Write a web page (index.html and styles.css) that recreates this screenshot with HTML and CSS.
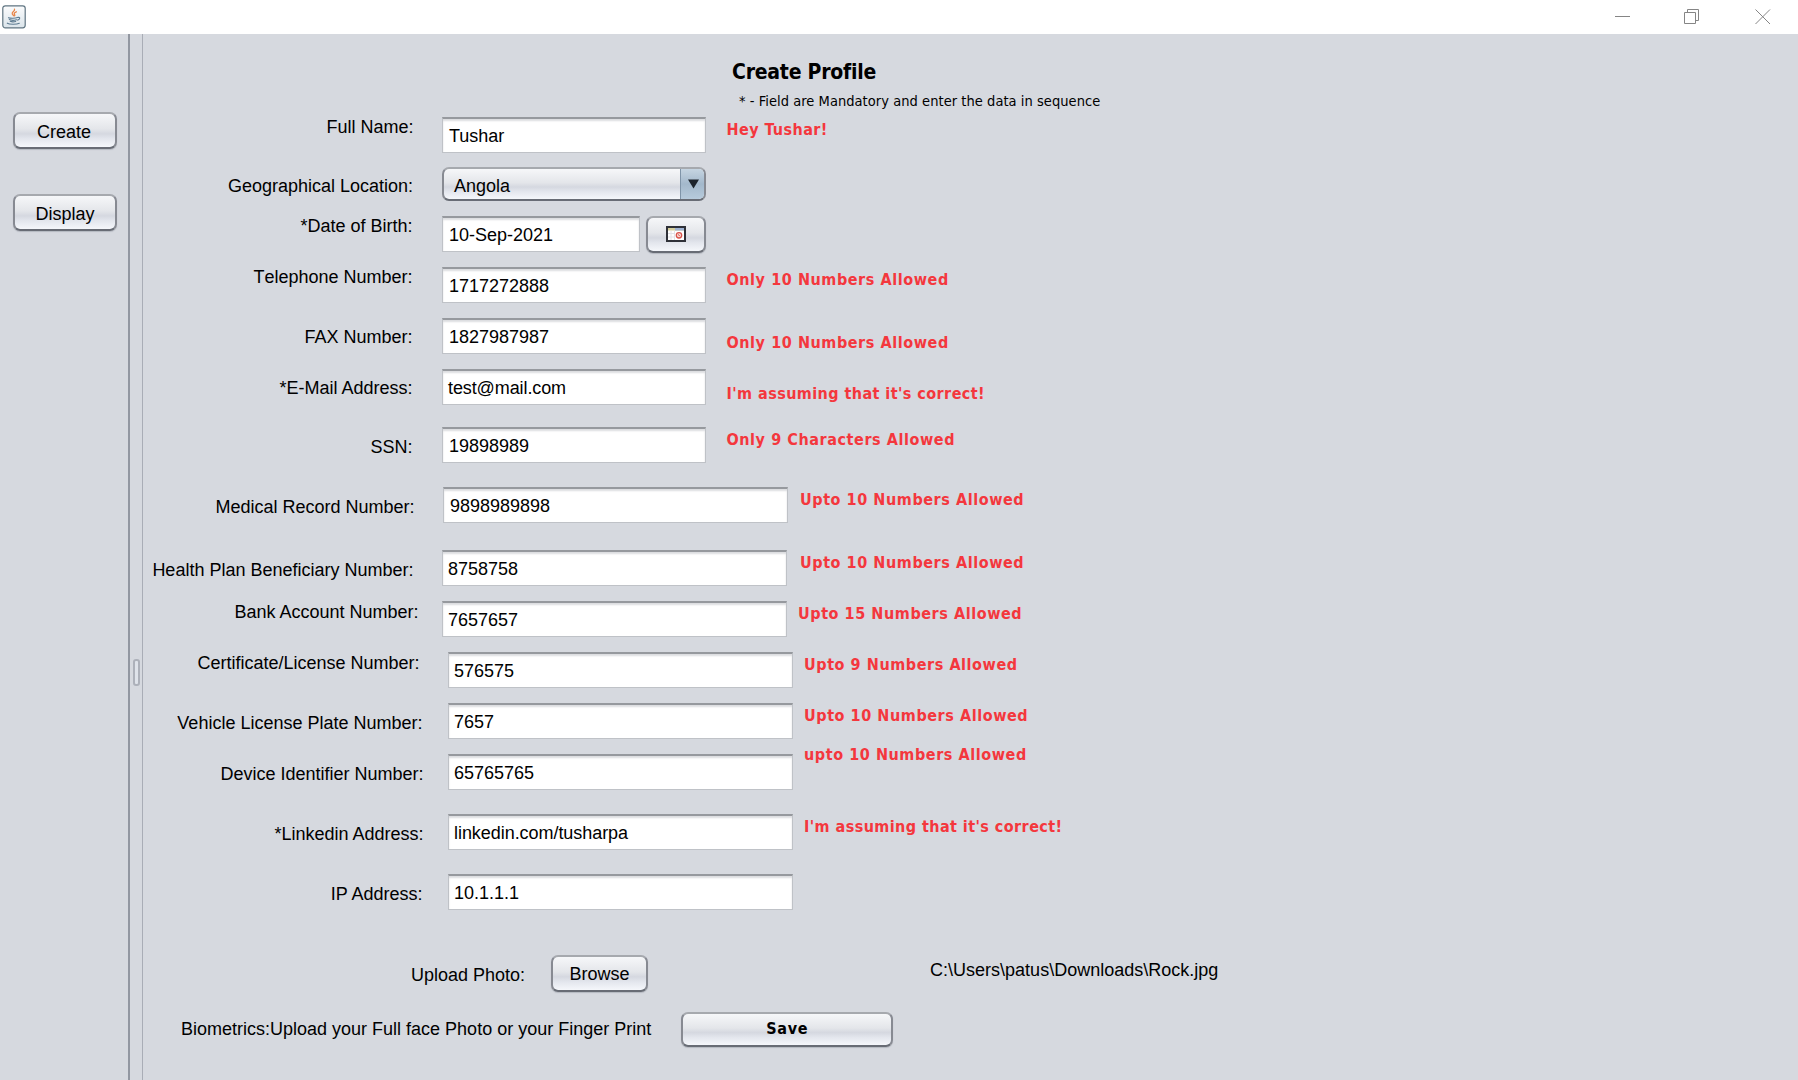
FILE: index.html
```
<!DOCTYPE html>
<html lang="en">
<head>
<meta charset="utf-8">
<title>Create Profile</title>
<link rel="stylesheet" href="styles.css">
</head>
<body>
<header class="titlebar">
  <svg class="java-icon" width="24" height="24" viewBox="0 0 24 24">
    <defs><linearGradient id="tile" x1="0" y1="0" x2="0" y2="1"><stop offset="0" stop-color="#fbfcfd"/><stop offset="1" stop-color="#dbe4ea"/></linearGradient></defs>
    <rect x=".8" y=".8" width="22.4" height="22" rx="2.5" fill="url(#tile)" stroke="#5f7481" stroke-width="1.2"/>
    <path d="M12.500 4.200c.8 2.100-3.300 2.800-2.200 4.800.4.700.9 1 1.300 1.700M14.300 6.800c-1.500.7-2.700 1.400-1.700 2.700.4.600.3 1-.1 1.400" fill="none" stroke="#e8864a" stroke-width="1.300" stroke-linecap="round"/>
    <path d="M6.500 12.700c1.500.8 7 .7 9-.1M7.300 14.600c1.800.8 5.400.7 7.200.1M8.200 16.300c1.500.6 3.900.6 5.500.1M16 12.400c2.400-.5 2.300 2-.4 2.700M5.300 18.200c2 1.300 9.500 1.300 12 0" fill="none" stroke="#5d7b91" stroke-width="1.100" stroke-linecap="round"/>
  </svg>
  <div class="window-controls">
    <svg width="16" height="16" viewBox="0 0 16 16"><path d="M0 7.5h15"/></svg>
    <svg width="16" height="16" viewBox="0 0 16 16"><path d="M.5 3.5h11v11h-11zM3.5 3.5v-3h11v11h-3"/></svg>
    <svg width="16" height="16" viewBox="0 0 16 16"><path d="M.5.5L15 15M15 .5L.5 15"/></svg>
  </div>
</header>
<main class="split">
  <nav class="sidebar">
    <button class="btn create">Create</button>
    <button class="btn display">Display</button>
  </nav>
  <div class="divider"><span class="grip"></span></div>
  <section class="content">
    <h1 class="title">Create Profile</h1>
    <p class="note">* - Field are Mandatory and enter the data in sequence</p>
    <form class="form">
      <div class="row name"><label>Full Name:</label><span class="field">Tushar</span><em>Hey Tushar!</em></div>
      <div class="row location"><label>Geographical Location:</label><span class="combo"><span>Angola</span><i><svg width="11" height="10" viewBox="0 0 11 10"><path d="M0 .5h11L5.5 9.500z" fill="#1c232b"/></svg></i></span></div>
      <div class="row birth"><label>*Date of Birth:</label><span class="field">10-Sep-2021</span><button type="button" class="btn picker"><svg width="20" height="16" viewBox="0 0 20 16"><path d="M1 1h18v14H1z" fill="#fff" stroke="#2f3138" stroke-width="2"/><path d="M2 2h16v2.500H2z" fill="#d5cf9d"/><path d="M9 2h9v2.500H9z" fill="#9fb3d3"/><path d="M5 5v9M8.500 5v9M2 7.500h7M2 11h7" stroke="#e2e2e8" fill="none"/><circle cx="13" cy="9.300" r="2.700" fill="#f8dcd8" stroke="#d9534a" stroke-width="1.300"/><path d="M12 8.500l1.800 1.300" stroke="#d9534a"/></svg></button></div>
      <div class="row phone"><label>Telephone Number:</label><span class="field">1717272888</span><em>Only 10 Numbers Allowed</em></div>
      <div class="row fax"><label>FAX Number:</label><span class="field">1827987987</span><em>Only 10 Numbers Allowed</em></div>
      <div class="row email"><label>*E-Mail Address:</label><span class="field">test@mail.com</span><em class="assumed">I'm assuming that it's correct!</em></div>
      <div class="row ssn"><label>SSN:</label><span class="field">19898989</span><em>Only 9 Characters Allowed</em></div>
      <div class="row wide record"><label>Medical Record Number:</label><span class="field">9898989898</span><em>Upto 10 Numbers Allowed</em></div>
      <div class="row wide plan"><label>Health Plan Beneficiary Number:</label><span class="field">8758758</span><em>Upto 10 Numbers Allowed</em></div>
      <div class="row wide bank"><label>Bank Account Number:</label><span class="field">7657657</span><em>Upto 15 Numbers Allowed</em></div>
      <div class="row wide indent certificate"><label>Certificate/License Number:</label><span class="field">576575</span><em>Upto 9 Numbers Allowed</em></div>
      <div class="row wide indent vehicle"><label>Vehicle License Plate Number:</label><span class="field">7657</span><em>Upto 10 Numbers Allowed</em></div>
      <div class="row wide indent device"><label>Device Identifier Number:</label><span class="field">65765765</span><em>upto 10 Numbers Allowed</em></div>
      <div class="row wide indent linkedin"><label>*Linkedin Address:</label><span class="field">linkedin.com/tusharpa</span><em class="assumed">I'm assuming that it's correct!</em></div>
      <div class="row wide indent ip"><label>IP Address:</label><span class="field">10.1.1.1</span></div>
    </form>
    <div class="upload"><span class="caption">Upload Photo:</span><button class="btn browse">Browse</button><span class="path">C:\Users\patus\Downloads\Rock.jpg</span></div>
    <div class="submit"><span class="caption">Biometrics:Upload your Full face Photo or your Finger Print</span><button class="btn save">Save</button></div>
  </section>
</main>
</body>
</html>
```
FILE: styles.css
```
* { box-sizing: border-box; }
body {
  margin: 0;
  width: 1798px;
  height: 1080px;
  display: flex;
  flex-direction: column;
  overflow: hidden;
  background: #d6d9df;
  color: #000;
  font: 18px/20px "Liberation Sans", Arial, sans-serif;
}

/* Window title bar */
.titlebar {
  height: 34px;
  flex: none;
  display: flex;
  justify-content: space-between;
  align-items: flex-start;
  padding: 5px 27px 0 2px;
  background: #fff;
}
.window-controls { display: flex; gap: 55px; padding-top: 4px; }
.window-controls svg { fill: none; stroke: #858585; stroke-width: 1; }
.window-controls svg:first-child { margin-right: -2px; }

/* Split pane */
.split { flex: 1; display: flex; }
.sidebar {
  width: 128px;
  padding: 78px 11px 0 13px;
  display: flex;
  flex-direction: column;
  gap: 45px;
}
.divider {
  width: 15px;
  display: flex;
  justify-content: center;
  align-items: flex-start;
  border-left: 2px solid #9297a1;
  border-right: 1px solid #a9adb6;
  padding-top: 625px;
}
.grip {
  width: 7px;
  height: 27px;
  border: 2px solid #adb1ba;
  border-radius: 3px;
  background: #dfe3ea;
}

/* Buttons */
.btn {
  height: 37px;
  padding: 0 0 1px;
  border: 2px solid;
  border-color: #a6a9ae #878a92 #686c75 #878a92;
  border-radius: 7px;
  background: linear-gradient(#f6f7f9, #e4e6ea 45%, #d5d8e0 60%, #e3e6ed 75%, #f5f7fb) padding-box;
  box-shadow: 0 1px 1px #b4b8c0;
  color: #000;
  font: inherit;
  display: flex;
  align-items: center;
  justify-content: center;
}
.btn.create { padding: 3px 2px 0 0; }
.btn.display { padding: 3px 0 0; }

/* Heading */
.content { flex: 1; display: flex; flex-direction: column; }
.title, .note, .row em, .btn.save {
  font-family: "DejaVu Sans Condensed", "DejaVu Sans", sans-serif;
  font-stretch: condensed;
}
.title { margin: 26px 0 0 589px; font-size: 21px; line-height: 24px; letter-spacing: -.23px; }
.note { margin: 7px 0 0 596px; font-size: 14.5px; line-height: 20px; letter-spacing: .05px; }

/* Form rows */
.form { padding-top: 6px; }
.row { display: flex; align-items: flex-start; white-space: nowrap; height: 51px; }
.row label { width: 299px; padding-right: 28.5px; text-align: right; }
.row em {
  margin: 3px 0 0 20.5px;
  color: #f4373d;
  font-size: 16px;
  font-weight: bold;
  font-style: normal;
  letter-spacing: .57px;
}
.row em.assumed { letter-spacing: .43px; }
.field {
  width: 264px;
  height: 36px;
  padding: 7px 6px;
  background: #fff;
  border: 1px solid #bfc2c7;
  border-top: 2px solid #96999e;
  box-shadow: inset 0 2px 2px #dcdde0;
}
.wide .field { width: 345px; }
.wide em { margin-left: 13px; }
.indent label { width: 305px; }
.indent .field { padding-left: 5px; }
.indent em { margin-left: 11px; }

.name { height: 50px; }
.name em { letter-spacing: .42px; }
.location { height: 49px; }
.location label { padding-top: 9px; padding-right: 29px; }
.birth label, .phone label, .fax label, .email label, .ssn label { padding-right: 29.5px; }
.birth .field { width: 198px; }
.phone label { font-kerning: none; }
.fax label, .email label { padding-top: 9px; }
.fax em, .email em { margin-top: 15px; }
.email { height: 58px; }
.email .field { padding-left: 5px; letter-spacing: -.1px; }
.ssn { height: 60px; }
.ssn label { padding-top: 10px; }
.record { height: 63px; }
.record label { width: 300px; padding-top: 10px; }
.record em { margin-left: 12px; }
.plan label { padding-top: 10px; }
.plan .field, .bank .field { padding-left: 5px; }
.bank label { padding-top: 1px; padding-right: 23.5px; }
.bank em { margin-left: 11px; }
.certificate label { padding-top: 1px; }
.vehicle label { padding-top: 10px; padding-right: 25.5px; }
.device { height: 60px; }
.device label { padding-top: 10px; padding-right: 24.5px; }
.device em { margin-top: -9px; }
.linkedin { height: 60px; }
.linkedin label { padding-top: 10px; padding-right: 24.5px; }
.linkedin .field { letter-spacing: -.05px; }
.ip { height: 36px; }
.ip label { padding-top: 10px; padding-right: 25.5px; }

/* Country drop-down */
.combo {
  width: 264px;
  height: 34px;
  display: flex;
  justify-content: space-between;
  border: 2px solid;
  border-color: #a6a9ae #878a92 #686c75 #878a92;
  border-radius: 7px;
  overflow: hidden;
  background: linear-gradient(#f6f7f9, #e4e6ea 45%, #d5d8e0 60%, #e3e6ed 75%, #f5f7fb) padding-box;
}
.combo > span { padding: 7px 0 0 10px; }
.combo i {
  width: 24px;
  display: flex;
  justify-content: center;
  padding: 10px 0 0 2px;
  border-left: 1px solid #7f94a8;
  background: linear-gradient(#c6d5e2, #a3b8cb 50%, #b7cbdc);
}
.picker { width: 60px; margin-left: 6px; }

/* Footer actions */
.upload { display: flex; padding: 45px 0 0 268px; }
.upload .caption { padding-top: 10px; }
.browse { width: 97px; margin-left: 26px; padding-top: 2px; }
.path { margin-left: 282px; padding-top: 5px; }
.submit { display: flex; padding: 20px 0 0 38px; }
.submit .caption { padding-top: 7px; }
.btn.save { width: 212px; height: 35px; margin-left: 30px; font-size: 16px; font-weight: bold; letter-spacing: .7px; }
```
